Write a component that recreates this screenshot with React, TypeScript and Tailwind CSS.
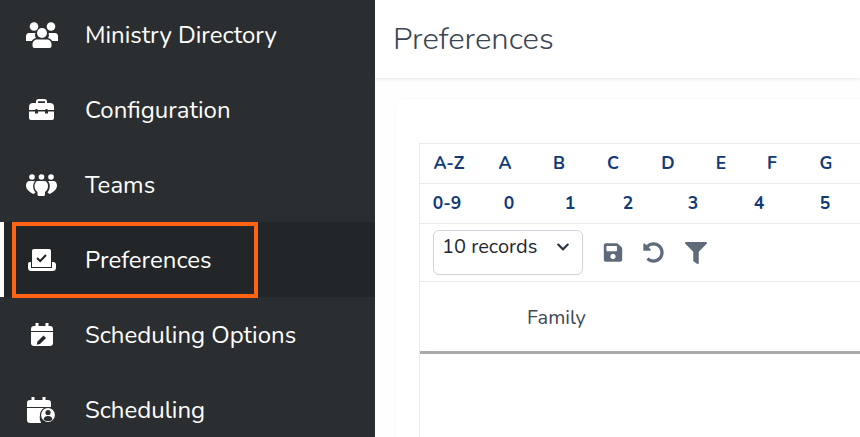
import { FaSave, FaUndoAlt, FaFilter, FaChevronDown } from "react-icons/fa";

const FONT = "font-['Nunito','Lato','Noto_Sans',sans-serif]";

function UsersIcon() {
  return (
    <svg viewBox="0 0 32 26" className="h-[26px] w-[32px]" fill="white">
      <circle cx="8" cy="4.500" r="4.300" />
      <circle cx="25" cy="4.500" r="4.300" />
      <path d="M3 11h6.500c-.8 1.500-.6 3.500.5 5-2 .7-3.500 1.700-4.200 3H0v-4.500C0 12.500 1.200 11 3 11z" />
      <path d="M29 11h-6.500c.8 1.500.6 3.500-.5 5 2 .7 3.500 1.700 4.200 3H32v-4.500C32 12.500 30.800 11 29 11z" />
      <circle cx="16" cy="11" r="5" />
      <path d="M11.500 17.500h9c3 0 5 2 5 5V24a2 2 0 0 1-2 2h-15a2 2 0 0 1-2-2v-1.500c0-3 2-5 5-5z" />
    </svg>
  );
}

function ToolboxIcon() {
  return (
    <svg viewBox="0 0 25 21" className="h-[21px] w-[25px]">
      <path fill="white" fillRule="evenodd" d="M7 4V2.500A2.500 2.500 0 0 1 9.500 0h6A2.500 2.500 0 0 1 18 2.500V4h3a4 4 0 0 1 4 4v3H0V8a4 4 0 0 1 4-4zM9 2.200V4h7V2.200z" />
      <path fill="white" d="M0 12.500h6v2h3v-2h7v2h3v-2h6V19a2 2 0 0 1-2 2H2a2 2 0 0 1-2-2z" />
      <path fill="#2b2e30" d="M6.500 10h2v3.500h-2zM16.500 10h2v3.500h-2z" />
    </svg>
  );
}

function TeamsIcon() {
  return (
    <svg viewBox="0 0 31 22" className="h-[22px] w-[31px]" fill="white">
      <circle cx="6" cy="3" r="2.800" />
      <circle cx="15.500" cy="3" r="2.800" />
      <circle cx="25" cy="3" r="2.800" />
      <path d="M3.500 7H9c-2.500 3-2.500 8 .5 11.500L7.500 20C3 18 0 15 0 11.500 0 9 1.500 7 3.500 7z" />
      <path d="M27.500 7H22c2.500 3 2.500 8-.5 11.500l2 1.500c4.500-2 7.500-5 7.500-8.500C31 9 29.500 7 27.500 7z" />
      <path d="M12.500 7h6c2 0 3.500 2 3.500 5 0 3-1.500 5-3 6v2.500a1.500 1.500 0 0 1-1.500 1.500h-4.500a1.500 1.500 0 0 1-1.500-1.500V18c-1.500-1-3-3-3-6 0-3 1.500-5 3.500-5z" />
    </svg>
  );
}

function PreferencesIcon() {
  return (
    <svg viewBox="0 0 28 22" className="h-[22px] w-[28px]">
      <path fill="white" d="M4 2a2 2 0 0 1 2-2h15a2 2 0 0 1 2 2v16H4z" />
      <path fill="white" d="M0 15a2 2 0 0 1 2-2h1v6h21v-6h1a3 3 0 0 1 3 2v3.500a3.500 3.500 0 0 1-3.500 3.500h-21A3.500 3.500 0 0 1 0 18.500z" />
      <path fill="none" stroke="#23262a" strokeWidth="2" d="M9 9l3.200 3 5.800-6" />
    </svg>
  );
}

function SchedulingOptionsIcon() {
  return (
    <svg viewBox="0 0 22 23" className="h-[23px] w-[22px]">
      <path fill="white" d="M4.500 0h3v3h7V0h3v3H19a3 3 0 0 1 3 3v2H0V6a3 3 0 0 1 3-3h1.500z" />
      <path fill="white" d="M0 9h22v11a3 3 0 0 1-3 3H3a3 3 0 0 1-3-3z" />
      <path fill="#23262a" d="M12.500 12.500l2.500 2.500-6 6-3.200.8.700-3.300z" />
    </svg>
  );
}

function SchedulingIcon() {
  return (
    <svg viewBox="0 0 29 26" className="h-[26px] w-[29px]">
      <path fill="white" d="M4.500 0h3v3h8V0h3v3H21a3 3 0 0 1 3 3v4H0V6a3 3 0 0 1 3-3h1.500z" />
      <path fill="white" d="M0 11h24v.500A9.500 9.500 0 0 0 14 25.500V26H3a3 3 0 0 1-3-3z" />
      <circle cx="21" cy="18" r="7.500" fill="white" stroke="#2b2e30" strokeWidth="1.200" />
      <circle cx="21" cy="15.500" r="2.600" fill="#2b2e30" />
      <path fill="#2b2e30" d="M16.500 22.500c.5-2.500 2-3.500 4.500-3.500s4 1 4.500 3.500c-1 1-2.800 1.500-4.500 1.500s-3.500-.5-4.500-1.500z" />
    </svg>
  );
}

const NAV = [
  { label: "Ministry Directory", icon: <UsersIcon /> },
  { label: "Configuration", icon: <ToolboxIcon /> },
  { label: "Teams", icon: <TeamsIcon /> },
  { label: "Preferences", icon: <PreferencesIcon />, active: true },
  { label: "Scheduling Options", icon: <SchedulingOptionsIcon /> },
  { label: "Scheduling", icon: <SchedulingIcon /> },
];

const LETTERS: [string, string][] = [
  ["A-Z", "w-[56px]"],
  ["A", "w-[56px]"],
  ["B", "w-[52px]"],
  ["C", "w-[56px]"],
  ["D", "w-[54px]"],
  ["E", "w-[52px]"],
  ["F", "w-[50px]"],
  ["G", "w-[58px]"],
];

const NUMBERS: [string, string][] = [
  ["0-9", "w-[52px]"],
  ["0", "w-[72px]"],
  ["1", "w-[50px]"],
  ["2", "w-[66px]"],
  ["3", "w-[64px]"],
  ["4", "w-[68px]"],
  ["5", "w-[64px]"],
];

function IndexRow({ items }: { items: [string, string][] }) {
  return (
    <div className="flex h-[40px] items-center border-b border-[#e8eaec] pl-px text-[17.5px] font-bold text-[#103a78]">
      {items.map(([text, width]) => (
        <span key={text} className={`${width} shrink-0 whitespace-nowrap text-center`}>
          {text}
        </span>
      ))}
    </div>
  );
}

export default function App() {
  return (
    <div className={`relative flex h-[437px] w-[860px] overflow-hidden bg-[#fefefe] ${FONT}`}>
      {/* sidebar */}
      <div className="w-[375px] shrink-0 bg-[#2b2e30]">
        <div className="-mt-[3px] flex flex-col">
          {NAV.map((item) => (
            <div
              key={item.label}
              className={`flex h-[75px] shrink-0 items-center text-white ${
                item.active ? "border-l-4 border-white bg-[#232628]" : "border-l-4 border-transparent"
              }`}
            >
              <span className="flex w-[81px] shrink-0 justify-center pl-[3px] pr-[9px] text-[0px]">{item.icon}</span>
              <span className="whitespace-nowrap text-[24px] leading-none">{item.label}</span>
            </div>
          ))}
        </div>
      </div>

      {/* highlight box around the active item */}
      <div className="absolute left-[12px] top-[222px] h-[76px] w-[246px] border-4 border-[#ff6314]" />

      {/* main */}
      <div className="flex min-w-0 flex-1 flex-col">
        <div className="flex h-[78px] shrink-0 items-center bg-white pl-[18px] shadow-[0_1px_4px_rgba(0,0,0,0.1)]">
          <h1 className="text-[31px] font-light leading-none text-[#3b4552]">Preferences</h1>
        </div>
        <div className="flex-1 pl-[21px] pt-[21px]">
          <div className="h-[400px] w-[500px] rounded-tl-lg bg-white pl-[23px] pt-[44px] shadow-[0_0_3px_rgba(0,0,0,0.04)]">
            <div className="h-[400px] border-l border-t border-[#e8eaec]">
              <IndexRow items={LETTERS} />
              <IndexRow items={NUMBERS} />
              <div className="flex h-[58px] items-center border-b border-[#e8eaec] pl-[13px]">
                <div className="flex h-[45px] w-[150px] items-center justify-between rounded-md border border-[#cfd4da] pb-[11px] pl-[8px] pr-[12px]">
                  <span className="text-[20px] leading-none text-[#1f2733]">10 records</span>
                  <FaChevronDown className="h-[14px] w-[14px] text-[#2f3640]" />
                </div>
                <FaSave className="ml-[20px] h-[21px] w-[20px] text-[#5f6b7a]" />
                <FaUndoAlt className="ml-[20px] h-[21px] w-[21px] text-[#5f6b7a]" />
                <FaFilter className="ml-[21px] h-[22px] w-[22px] text-[#5f6b7a]" />
              </div>
              <div className="flex h-[72px] items-center border-b-[3px] border-[#a8abae] pl-[107px] pt-[2px] text-[20px] text-[#3f4753]">
                Family
              </div>
            </div>
          </div>
        </div>
      </div>
    </div>
  );
}
